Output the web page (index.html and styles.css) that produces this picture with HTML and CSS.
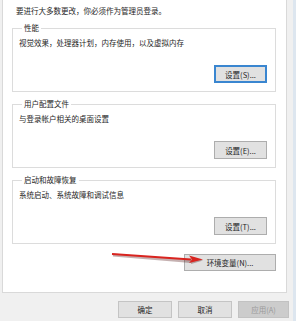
FILE: index.html
```html
<!DOCTYPE html>
<html lang="zh-CN">
<head>
    <meta charset="UTF-8">
    <title>系统属性 - 高级</title>
    <link rel="stylesheet" href="styles.css">
</head>
<body>
    <div class="window">
        <!-- Вкладка "Дополнительно" -->
        <div class="page">
            <p class="intro">要进行大多数更改，你必须作为管理员登录。</p>

            <fieldset class="group">
                <legend>性能</legend>
                <p class="desc">视觉效果，处理器计划，内存使用，以及虚拟内存</p>
                <div class="row">
                    <button class="btn focused">设置(S)...</button>
                </div>
            </fieldset>

            <fieldset class="group">
                <legend>用户配置文件</legend>
                <p class="desc">与登录帐户相关的桌面设置</p>
                <div class="row">
                    <button class="btn">设置(E)...</button>
                </div>
            </fieldset>

            <fieldset class="group">
                <legend>启动和故障恢复</legend>
                <p class="desc">系统启动、系统故障和调试信息</p>
                <div class="row">
                    <button class="btn">设置(T)...</button>
                </div>
            </fieldset>

            <div class="row env-row">
                <button class="btn env">环境变量(N)...</button>
            </div>

            <!-- Красная стрелка -->
            <svg class="arrow" width="100" height="16" viewBox="0 0 100 16">
                <path d="M2 4 L80 10.5" stroke="#5a2020" stroke-opacity="0.35" stroke-width="3" fill="none"/>
                <path d="M80 7 L92 9.5 L80 13 Z" fill="#5a2020" fill-opacity="0.35"/>
                <path d="M1 3 L80 8.5" stroke="#d9241f" stroke-width="2" fill="none"/>
                <path d="M78 4.5 L92 8.5 L78 12 L81 8.4 Z" fill="#d9241f"/>
            </svg>
        </div>

        <!-- Кнопки диалога -->
        <div class="footer">
            <button class="btn bottom">确定</button>
            <button class="btn bottom">取消</button>
            <button class="btn bottom" disabled>应用(A)</button>
        </div>
    </div>
</body>
</html>
```

FILE: styles.css
```css
/* Общие стили */
* {
    margin: 0;
    padding: 0;
    box-sizing: border-box;
}

body {
    font-family: "Noto Sans CJK SC", "Liberation Sans", sans-serif;
    font-size: 7.5px;
    color: #1e1e1e;
    background-color: #f0f0f0;
    width: 296px;
    height: 321px;
    overflow: hidden;
}

.window {
    height: 100%;
    border-right: 3px solid #dde6ef;
    padding-left: 2px;
    padding-right: 6px;
}

/* Белая панель вкладки */
.page {
    position: relative;
    height: 293px;
    background-color: #ffffff;
    border: 1px solid #d9d9d9;
    border-top: none;
    padding: 6px 10px 0 9px;
}

.intro {
    line-height: 10px;
    padding-left: 4px;
}

/* Группы */
.group {
    margin-top: 7px;
    border: 1px solid #dcdcdc;
    padding: 5px 8px 8px 6px;
}

.group legend {
    line-height: 10px;
    padding: 0 2px;
    margin-left: 3px;
}

.desc {
    line-height: 10px;
}

.row {
    display: flex;
    justify-content: flex-end;
    margin-top: 17px;
}

/* Кнопки */
.btn {
    font-family: inherit;
    font-size: 7.5px;
    color: #1e1e1e;
    height: 18px;
    background-color: #e1e1e1;
    border: 1px solid #adadad;
    padding: 0 6px;
}

.group .btn {
    width: 53px;
}

.btn.focused {
    border: 2px solid #3a86d0;
}

.env-row {
    margin-top: 10px;
}

.btn.env {
    width: 92px;
    height: 17px;
}

.arrow {
    position: absolute;
    left: 108px;
    top: 251px;
}

/* Нижняя панель */
.footer {
    display: flex;
    justify-content: flex-end;
    gap: 6px;
    margin-top: 8px;
    margin-right: -2px;
}

.btn.bottom {
    width: 54px;
    height: 17px;
    border-color: #c4c4c4;
}

.btn.bottom:disabled {
    background-color: #cccccc;
    border-color: #c2c2c2;
    color: #9a9a9a;
    width: 51px;
}
```
